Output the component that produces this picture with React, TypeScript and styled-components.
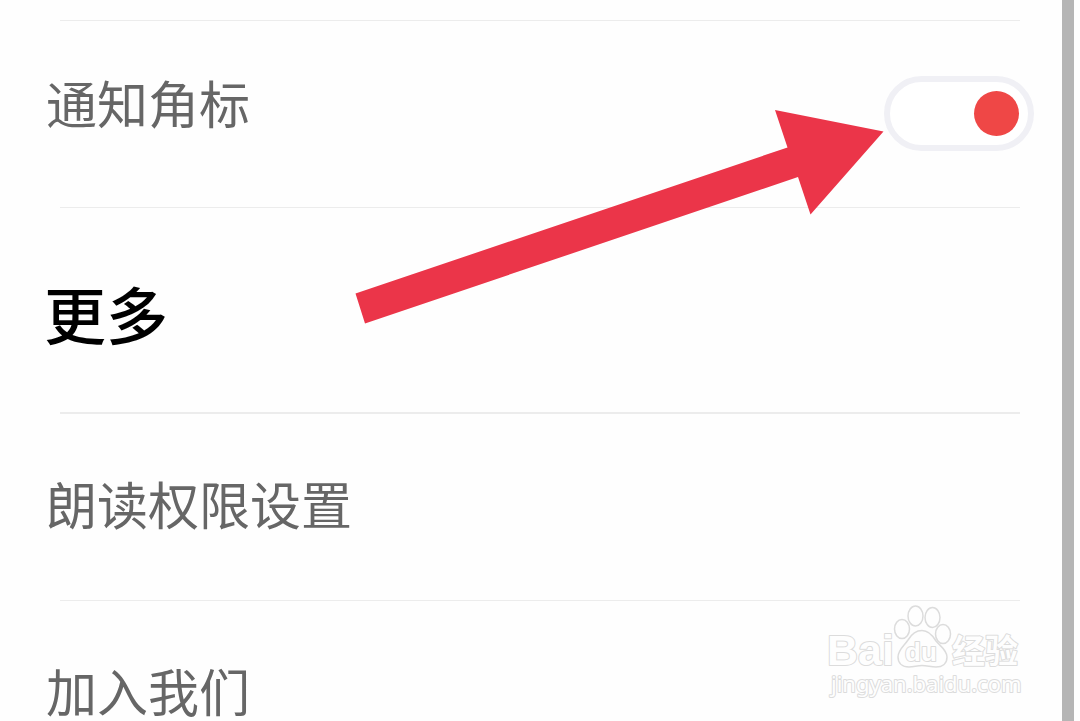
import React from "react";
import styled, { createGlobalStyle } from "styled-components";

const GlobalStyle = createGlobalStyle`
  * { box-sizing: border-box; }
  body {
    margin: 0;
    background: #fefefe;
    font-family: "Noto Sans CJK SC", sans-serif;
    overflow: hidden;
  }
`;

const Page = styled.div`
  position: relative;
  display: flex;
  height: 100vh;
  padding-right: 6px;
  overflow: hidden;
`;

const Settings = styled.main`
  flex: 1;
  min-width: 0;
  padding-top: 20px;
`;

const ScrollStrip = styled.div`
  width: 12px;
  background: #b5b5b5;
`;

const Divider = styled.hr<{ $thick?: boolean }>`
  height: ${(p) => (p.$thick ? 2 : 1)}px;
  margin: 0 42px 0 60px;
  border: 0;
  background: #ececec;
`;

const Row = styled.div<{ $withControl?: boolean }>`
  display: flex;
  justify-content: space-between;
  align-items: ${(p) => (p.$withControl ? "flex-start" : "center")};
  min-height: 186px;
  padding: ${(p) => (p.$withControl ? "55px 28px 56px 46px" : "60px 28px 68px 46px")};
`;

const Label = styled.label`
  font-size: 51px;
  line-height: 52px;
  color: #666;
`;

const LinkLabel = styled.a`
  font-size: 51px;
  line-height: 52px;
  color: #666;
  text-decoration: none;
`;

const Heading = styled.h1`
  margin: 0;
  padding: 69px 28px 63px 44px;
  font-size: 62px;
  line-height: 72px;
  font-weight: 500;
  color: #000;
`;

const Toggle = styled.input`
  appearance: none;
  display: flex;
  align-items: center;
  justify-content: flex-start;
  width: 150px;
  height: 75px;
  margin: 0;
  padding: 0 9px;
  border: 6px solid #f0f0f5;
  border-radius: 38px;
  background: #fff;

  &::before {
    content: "";
    width: 45px;
    height: 45px;
    border-radius: 50%;
    background: #ccc;
  }
  &:checked {
    justify-content: flex-end;
  }
  &:checked::before {
    background: #ef4746;
  }
`;

const Arrow = styled.svg`
  position: absolute;
  top: 108px;
  left: 354px;
  pointer-events: none;
`;

const Watermark = styled.svg`
  position: absolute;
  top: 600px;
  right: 50px;
  pointer-events: none;
  fill: #fefefe;
  stroke: #dcdcdc;
  stroke-width: 2px;
  stroke-linejoin: round;

  text {
    paint-order: stroke;
  }
`;

const Brand = styled.text`
  font: bold 43px "Liberation Sans", sans-serif;
`;

const PawText = styled.text`
  font: bold 26px "Liberation Sans", sans-serif;
`;

const BrandCjk = styled.text`
  font: bold 33px "Noto Sans CJK SC", sans-serif;
`;

const SiteText = styled.text`
  font: 22px "Noto Sans", sans-serif;
`;

export default function App() {
  return (
    <>
      <GlobalStyle />
      <Page>
        <Settings>
          <Divider />
          <Row $withControl>
            <Label htmlFor="badge">通知角标</Label>
            <Toggle id="badge" type="checkbox" role="switch" defaultChecked />
          </Row>
          <Divider />
          <Heading>更多</Heading>
          <Divider $thick />
          <Row>
            <LinkLabel href="#reading">朗读权限设置</LinkLabel>
          </Row>
          <Divider />
          <Row>
            <LinkLabel href="#join">加入我们</LinkLabel>
          </Row>
        </Settings>
        <ScrollStrip />

        <Arrow width="532" height="218" viewBox="354 108 532 218" aria-hidden="true">
          <path
            d="M355.500 293.5 L787.5 147.5 L775 110 L883.500 131.500 L810.500 214.500 L798 177 L365 323.500 Z"
            fill="#eb3549"
          />
        </Arrow>

        <Watermark width="210" height="110" viewBox="820 600 210 110" aria-label="Baidu 经验">
          <Brand x="827" y="665">Bai</Brand>
          <g strokeWidth="1.5">
            <ellipse cx="902" cy="629" rx="7.500" ry="9.500" />
            <ellipse cx="915.500" cy="616" rx="7.500" ry="10" />
            <ellipse cx="932.500" cy="617.500" rx="7.500" ry="10" />
            <ellipse cx="943" cy="634" rx="7.500" ry="9.500" />
            <path d="M922 630.500 C929 630.500 933 636 936 641 C940 646 947 650 947 657 C947 664 942 667 936 667 C931 667 927 665.500 922 665.500 C917 665.500 914 667 909 667 C902 667 898 663 898 657 C898 650 904 646 908 640 C911 635 915 630.500 922 630.500 Z" />
          </g>
          <PawText x="905" y="661">du</PawText>
          <BrandCjk x="952" y="663">经验</BrandCjk>
          <SiteText x="831" y="692">jingyan.baidu.com</SiteText>
        </Watermark>
      </Page>
    </>
  );
}
